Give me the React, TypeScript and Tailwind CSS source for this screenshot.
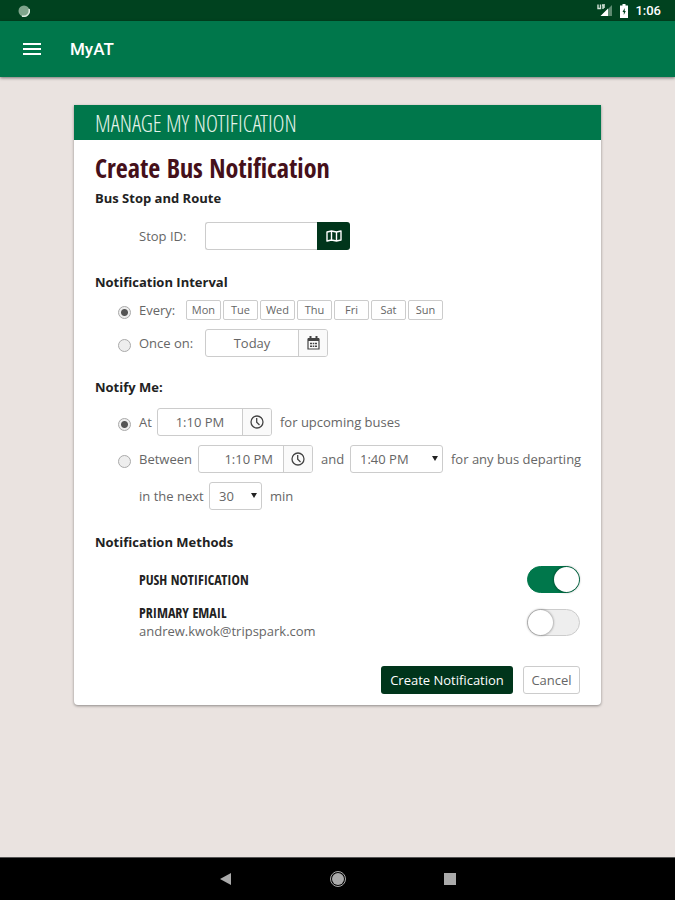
import { useState } from 'react';
import type { ReactNode } from 'react';
import clsx from 'clsx';

const DAYS = ['Mon', 'Tue', 'Wed', 'Thu', 'Fri', 'Sat', 'Sun'];

const condensed = "font-['Open_Sans_Condensed','Liberation_Sans_Narrow','Open_Sans',sans-serif]";
const condensedLight = "font-['Open_Sans_Condensed_Light','Open_Sans_Condensed','Liberation_Sans_Narrow',sans-serif]";

function StatusBar() {
  return (
    <div className="flex h-[21px] items-center bg-[#00421f] pr-[14px] pl-[18px] text-white">
      <svg className="h-3 w-3" viewBox="0 0 12 12">
        <circle cx="6" cy="6" r="5.5" fill="#7fa58c" />
        <path d="M11 4A5.5 5.5 0 0 1 4 11" fill="none" stroke="#dcebe0" strokeWidth="1.5" />
      </svg>
      <div className="ml-auto flex items-center gap-[7px]">
        <svg className="h-[13px] w-4" viewBox="0 0 16 13">
          <path d="M15 1v11H4z" fill="#5d8a70" />
          <path d="M11 4.500V12H3.500z" fill="#fff" />
          <path d="M1 .5v4h2.500v-4M6 5V1M5 1h3M6 3h2" fill="none" stroke="#d5e5da" strokeWidth="1.400" />
        </svg>
        <svg className="h-[14px] w-2" viewBox="0 0 8 14">
          <path d="M2.500 0h3v1.500H8V14H0V1.500h2.500z" fill="#fff" />
          <path d="M4.700 4 2.500 8h1.300v3l2-4H4.700z" fill="#00421f" />
        </svg>
        <span className="font-[Roboto,sans-serif] text-[13px] leading-5 font-medium">1:06</span>
      </div>
    </div>
  );
}

function AppBar() {
  return (
    <header className="z-10 flex h-14 items-center gap-[29px] bg-[#00774b] px-[23px] text-white shadow-[0_1px_3px_rgba(0,0,0,0.5)]">
      <button type="button" aria-label="Menu">
        <svg className="h-3 w-[18px]" viewBox="0 0 18 12" fill="currentColor">
          <path d="M0 0h18v2H0zM0 5h18v2H0zM0 10h18v2H0z" />
        </svg>
      </button>
      <h1 className="font-[Roboto,sans-serif] text-[17px] font-medium">MyAT</h1>
    </header>
  );
}

function MapIcon() {
  return (
    <svg className="h-3 w-4" viewBox="0 0 16 12" fill="none" stroke="currentColor" strokeWidth="1.4" strokeLinejoin="round">
      <path d="M1 2 5.500 1l5 1L15 1v9l-4.500 1-5-1L1 11zM5.500 1v9M10.500 2v9" />
    </svg>
  );
}

function CalendarIcon() {
  return (
    <svg className="h-[14px] w-[13px]" viewBox="0 0 13 14" fill="none" stroke="#444">
      <path d="M1 3h11v10H1z" strokeWidth="1.200" />
      <path d="M1 3.500h11" strokeWidth="3" />
      <path d="M3.500 0v3M9.500 0v3" strokeWidth="2" />
      <path d="M3 7.500h2M5.700 7.500h1.600M8 7.500h2M3 10.300h2M5.700 10.300h1.600M8 10.300h2" strokeWidth="1.500" />
    </svg>
  );
}

function ClockIcon() {
  return (
    <svg className="h-[14px] w-[14px]" viewBox="0 0 14 14" fill="none" stroke="#444" strokeWidth="1.300">
      <circle cx="7" cy="7" r="6" />
      <path d="M6.700 3v4.200L9.500 10" />
    </svg>
  );
}

type PickerProps = {
  id: string;
  label: string;
  value: string;
  icon: ReactNode;
  className: string;
  align?: 'center' | 'right';
};

function Picker({ id, label, value, icon, className, align = 'center' }: PickerProps) {
  return (
    <div className={clsx('flex h-7 shrink-0 overflow-hidden rounded-[3px] border border-[#ccc] bg-white', className)}>
      <input
        id={id}
        aria-label={label}
        defaultValue={value}
        className={clsx('min-w-0 flex-1 outline-none', align === 'right' ? 'pr-[10px] text-right' : 'text-center')}
      />
      <button
        type="button"
        aria-label={`Pick ${label}`}
        className="flex w-[29px] items-center justify-center border-l border-[#ccc] bg-[#fafafa]"
      >
        {icon}
      </button>
    </div>
  );
}

function Select({ label, options, className }: { label: string; options: string[]; className: string }) {
  return (
    <div className={clsx('relative shrink-0', className)}>
      <select
        aria-label={label}
        className="h-7 w-full appearance-none rounded-[3px] border border-[#ccc] bg-white pl-[9px] outline-none"
      >
        {options.map((o) => (
          <option key={o}>{o}</option>
        ))}
      </select>
      <svg className="pointer-events-none absolute top-[11px] right-[5px] h-[5px] w-[6px]" viewBox="0 0 6 5">
        <path d="M0 0h6L3 5z" fill="#222" />
      </svg>
    </div>
  );
}

type RadioProps = { id: string; name: string; checked: boolean; onChange: () => void };

function Radio({ id, name, checked, onChange }: RadioProps) {
  return (
    <input
      type="radio"
      id={id}
      name={name}
      checked={checked}
      onChange={onChange}
      className="mt-1 mr-2 -ml-[21px] h-[13px] w-[13px] shrink-0 appearance-none rounded-full border border-[#aaa] bg-[#eee] checked:bg-[radial-gradient(circle,#555_0_3px,#eee_4px)]"
    />
  );
}

function Toggle({ id, defaultChecked }: { id: string; defaultChecked?: boolean }) {
  return (
    <input
      type="checkbox"
      role="switch"
      id={id}
      defaultChecked={defaultChecked}
      className="flex h-[27px] w-[53px] shrink-0 appearance-none rounded-full border border-[#ccc] bg-[#eee] before:h-[25px] before:w-[25px] before:rounded-full before:bg-white before:shadow-[0_0_2px_1px_rgba(0,0,0,0.25)] checked:justify-end checked:border-[#00774b] checked:bg-[#00774b]"
    />
  );
}

function SectionTitle({ children }: { children: ReactNode }) {
  return <h3 className="text-[13px] leading-5 font-bold text-[#222]">{children}</h3>;
}

function Row({ children }: { children: ReactNode }) {
  return <div className="flex h-7 items-center pl-11 whitespace-nowrap">{children}</div>;
}

export default function App() {
  const [interval, setInterval] = useState('every');
  const [notify, setNotify] = useState('at');

  return (
    <div className="flex min-h-screen flex-col bg-[#eae3e0] font-['Open_Sans',sans-serif] text-[13px] leading-5 text-[#666]">
      <StatusBar />
      <AppBar />

      <main className="flex-1 px-[74px] py-7">
        <div className="overflow-hidden rounded-b-[4px] bg-white shadow-[0_1px_3px_rgba(0,0,0,0.4)]">
          <div className="flex h-[35px] items-center bg-[#00774b] px-[21px]">
            <h2 className={clsx(condensedLight, 'text-[23px] leading-8 font-light text-[#e4f3ea]')}>MANAGE MY NOTIFICATION</h2>
          </div>

          <form className="px-[21px] pt-3 pb-[11px]" onSubmit={(e) => e.preventDefault()}>
            <h2 className={clsx(condensed, 'text-[26px] leading-8 font-bold text-[#45101a]')}>Create Bus Notification</h2>

            {/* Stop */}
            <section className="mt-1">
              <SectionTitle>Bus Stop and Route</SectionTitle>
              <div className="mt-[14px]">
                <Row>
                  <label htmlFor="stop" className="w-[66px]">Stop ID:</label>
                  <input id="stop" className="h-7 w-28 rounded-l-[3px] border border-r-0 border-[#ccc] px-2 outline-none" />
                  <button
                    type="button"
                    aria-label="Find stop on map"
                    className="flex h-7 w-[33px] items-center justify-center rounded-r-[3px] bg-[#00351b] text-white"
                  >
                    <MapIcon />
                  </button>
                </Row>
              </div>
            </section>

            {/* Interval */}
            <section className="mt-[22px]">
              <SectionTitle>Notification Interval</SectionTitle>
              <div className="mt-1 flex flex-col gap-[5px]">
                <Row>
                  <Radio id="every" name="interval" checked={interval === 'every'} onChange={() => setInterval('every')} />
                  <label htmlFor="every" className="w-[47px]">Every:</label>
                  <div className="flex gap-[2px]">
                    {DAYS.map((day) => (
                      <button
                        key={day}
                        type="button"
                        className="h-5 w-[35px] rounded-[2px] border border-[#ccc] text-[11px] leading-4"
                      >
                        {day}
                      </button>
                    ))}
                  </div>
                </Row>
                <Row>
                  <Radio id="once" name="interval" checked={interval === 'once'} onChange={() => setInterval('once')} />
                  <label htmlFor="once" className="w-[66px]">Once on:</label>
                  <Picker id="date" label="date" value="Today" icon={<CalendarIcon />} className="w-[123px]" />
                </Row>
              </div>
            </section>

            {/* Time */}
            <section className="mt-5">
              <SectionTitle>Notify Me:</SectionTitle>
              <div className="mt-[11px] flex flex-col gap-[9px]">
                <Row>
                  <Radio id="at" name="notify" checked={notify === 'at'} onChange={() => setNotify('at')} />
                  <label htmlFor="at" className="w-[18px]">At</label>
                  <Picker id="at-time" label="time" value="1:10 PM" icon={<ClockIcon />} className="w-[115px]" />
                  <span className="ml-2">for upcoming buses</span>
                </Row>
                <Row>
                  <Radio id="between" name="notify" checked={notify === 'between'} onChange={() => setNotify('between')} />
                  <label htmlFor="between" className="w-[59px] shrink-0">Between</label>
                  <Picker id="from-time" label="start time" value="1:10 PM" icon={<ClockIcon />} className="w-[115px]" align="right" />
                  <span className="w-[37px] shrink-0 pl-2">and</span>
                  <Select label="End time" options={['1:40 PM', '2:10 PM', '2:40 PM']} className="w-[93px]" />
                  <span className="ml-2">for any bus departing</span>
                </Row>
                <Row>
                  <span className="w-[70px]">in the next</span>
                  <Select label="Minutes" options={['30', '45', '60']} className="w-[53px]" />
                  <span className="ml-2">min</span>
                </Row>
              </div>
            </section>

            {/* Methods */}
            <section className="mt-[22px]">
              <SectionTitle>Notification Methods</SectionTitle>
              <div className="mt-[14px] flex flex-col gap-4 pl-11">
                <div className="flex h-[27px] items-center justify-between">
                  <label htmlFor="push" className={clsx(condensed, 'text-[14px] leading-4 font-bold text-[#222]')}>PUSH NOTIFICATION</label>
                  <Toggle id="push" defaultChecked />
                </div>
                <div className="flex h-[27px] items-center justify-between">
                  <label htmlFor="email">
                    <span className={clsx(condensed, 'block text-[14px] leading-4 font-bold text-[#222]')}>PRIMARY EMAIL</span>
                    <span className="block">andrew.kwok@tripspark.com</span>
                  </label>
                  <Toggle id="email" />
                </div>
              </div>
            </section>

            <div className="mt-[30px] flex justify-end gap-[10px]">
              <button type="submit" className="h-7 w-[132px] rounded-[3px] bg-[#00351b] whitespace-nowrap text-white">
                Create Notification
              </button>
              <button type="button" className="h-7 w-[57px] rounded-[3px] border border-[#ccc]">
                Cancel
              </button>
            </div>
          </form>
        </div>
      </main>

      <nav className="flex h-[43px] items-center justify-center gap-[92px] border-t border-[#555] bg-black text-[#aaa]">
        <button type="button" aria-label="Back">
          <svg className="h-5 w-5" viewBox="0 0 20 20" fill="currentColor">
            <path d="M15 4v12L4 10z" />
          </svg>
        </button>
        <button type="button" aria-label="Home">
          <svg className="h-5 w-5" viewBox="0 0 20 20" fill="currentColor">
            <circle cx="10" cy="10" r="6" />
            <circle cx="10" cy="10" r="7.500" fill="none" stroke="currentColor" strokeWidth="1" />
          </svg>
        </button>
        <button type="button" aria-label="Recent apps">
          <svg className="h-5 w-5" viewBox="0 0 20 20" fill="currentColor">
            <path d="M4 4h12v12H4z" />
          </svg>
        </button>
      </nav>
    </div>
  );
}
